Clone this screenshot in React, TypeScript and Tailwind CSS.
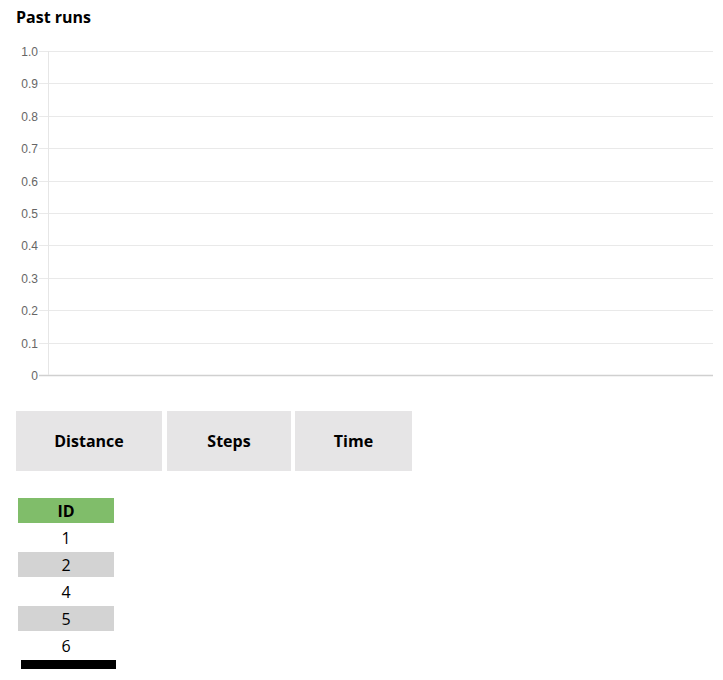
import React from "react";

const TOP = 36;
const ticks = ["1.0", "0.9", "0.8", "0.7", "0.6", "0.5", "0.4", "0.3", "0.2", "0.1", "0"];

function Chart() {
  return (
    <svg width={723} height={354} className="block" style={{ fontFamily: '"Liberation Sans", Arial, sans-serif' }}>
      {ticks.map((t, i) => {
        const y = Math.round(51 + i * 32.4 - TOP) + 0.5;
        const isZero = i === ticks.length - 1;
        return (
          <g key={t}>
            <line x1={39} x2={713} y1={y} y2={y} stroke={isZero ? "#d0d0d0" : "#e9e9e9"} strokeWidth={isZero ? 1.6 : 1} />
            <text x={38} y={y + 4} textAnchor="end" fontSize={12} fill="#666">
              {t}
            </text>
          </g>
        );
      })}
      <line x1={48.5} x2={48.5} y1={51 - TOP} y2={375 - TOP} stroke="#e6e6e6" strokeWidth={1} />
    </svg>
  );
}

const font = { fontFamily: '"Comic Sans MS", "Open Sans", sans-serif' };

export default function App() {
  const rows = ["1", "2", "4", "5", "6"];
  return (
    <div className="w-[723px] h-[680px] bg-white text-black overflow-hidden" style={font}>
      <div className="px-4 pt-[8px] h-[36px]">
        <div className="text-base font-bold leading-[18px]">Past runs</div>
      </div>
      <Chart />
      <div className="flex px-4 mt-[21px]">
        <div className="w-[146px] h-[60px] bg-[#e6e5e6] flex items-center justify-center font-bold text-base">Distance</div>
        <div className="ml-[5px] w-[124px] h-[60px] bg-[#e6e5e6] flex items-center justify-center font-bold text-base">Steps</div>
        <div className="ml-[4px] w-[117px] h-[60px] bg-[#e6e5e6] flex items-center justify-center font-bold text-base">Time</div>
      </div>
      <div className="pl-[18px] mt-[27px] flex flex-col gap-[2px] w-[114px]">
        <div className="h-[25px] w-[96px] bg-[#80bd6a] flex items-center justify-center font-bold text-base">ID</div>
        {rows.map((r, i) => (
          <div
            key={r}
            className={
              "h-[25px] w-[96px] flex items-center justify-center text-base " + (i % 2 === 1 ? "bg-[#d3d3d3]" : "bg-white")
            }
          >
            {r}
          </div>
        ))}
      </div>
      <div className="ml-[21px] mt-[2px] w-[95px] h-[9px] bg-black" />
    </div>
  );
}
